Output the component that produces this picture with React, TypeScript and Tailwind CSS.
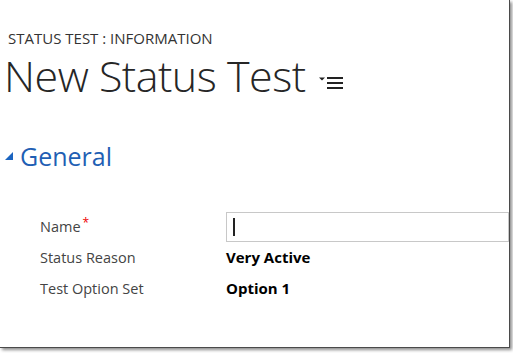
import React from "react";

export default function App() {
  return (
    <div className="w-[513px] h-[353px] bg-white overflow-hidden" style={{ fontFamily: '"Open Sans", "Noto Sans", sans-serif' }}>
      <div className="w-[510px] h-[348px] bg-white border-r border-b border-[#4a4a4a] shadow-[2px_2px_3px_rgba(0,0,0,0.45)] overflow-hidden">
        <div className="pl-[8px] pt-[29px] text-[15px] leading-[18px] text-[#333] tracking-[0px]">
          STATUS TEST : INFORMATION
        </div>
        <div className="flex items-center pl-[4px] mt-[4px] h-[50px]">
          <span className="text-[43px] leading-[50px] font-light text-[#262626] tracking-[-0.5px]">New Status Test</span>
          <span className="ml-[13px] mt-[13px] flex items-center">
            <svg width="24" height="14" viewBox="0 0 24 14">
              <polygon points="0,1.5 6,1.5 3,4.5" fill="#222" />
              <rect x="8" y="1" width="16" height="2" fill="#222" />
              <rect x="8" y="6" width="16" height="2" fill="#222" />
              <rect x="8" y="11" width="16" height="2" fill="#222" />
            </svg>
          </span>
        </div>
        <div className="flex items-center mt-[39px] pl-[5px]">
          <svg width="8" height="8" viewBox="0 0 8 8">
            <polygon points="8,0 8,8 0,8" fill="#1b64c0" />
          </svg>
          <span className="ml-[7px] text-[25px] leading-[32px] text-[#1f5fb4]">General</span>
        </div>
        <div className="mt-[39px]">
          <div className="flex items-center h-[31px]">
            <div className="w-[226px] pl-[40px] text-[14.5px] text-[#444]">
              Name<span className="text-[#e00] text-[12px] align-top relative -top-[2px] ml-[2px]">*</span>
            </div>
            <div className="flex-1 h-[30px] border border-[#c8c8c8] flex items-center pl-[6px]">
              <div className="w-[2px] h-[18px] bg-[#222]" />
            </div>
          </div>
          <div className="flex items-center h-[31px]">
            <div className="w-[226px] pl-[40px] text-[14.5px] text-[#444]">Status Reason</div>
            <div className="font-bold text-[15px] text-black">Very Active</div>
          </div>
          <div className="flex items-center h-[31px]">
            <div className="w-[226px] pl-[40px] text-[14.5px] text-[#444]">Test Option Set</div>
            <div className="font-bold text-[15px] text-black">Option 1</div>
          </div>
        </div>
      </div>
    </div>
  );
}
